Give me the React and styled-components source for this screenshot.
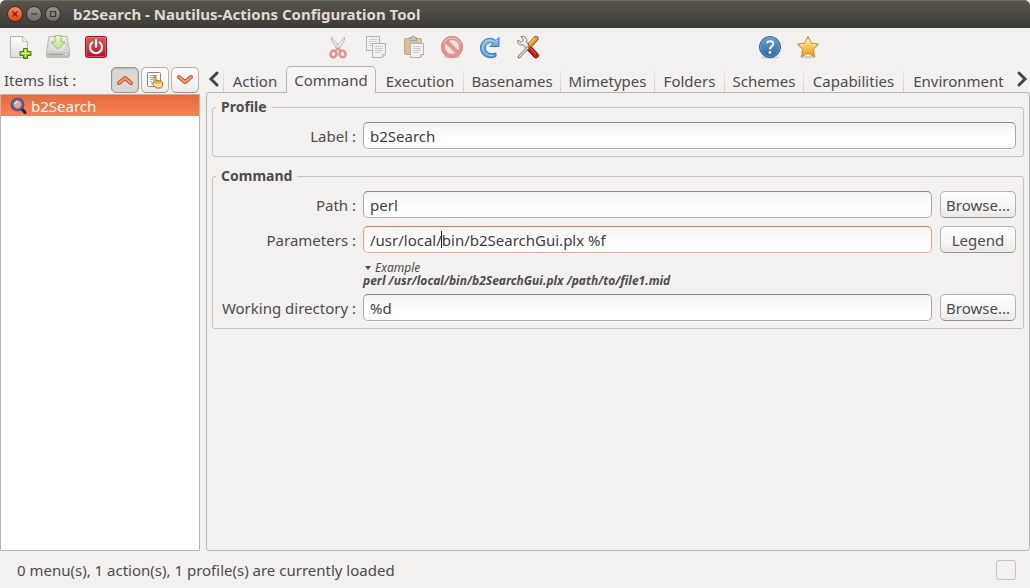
import React, { useState } from "react";
import styled, { createGlobalStyle, css } from "styled-components";

const GlobalStyle = createGlobalStyle`
  *, *::before, *::after { box-sizing: border-box; }
  body {
    margin: 0;
    background: #f2f1f0;
    color: #4c4c4c;
    font: 15px/20px "Noto Sans", "Open Sans", sans-serif;
  }
  button, input { font: inherit; color: inherit; margin: 0; }
`;

const Window = styled.div`
  display: flex;
  flex-direction: column;
  min-height: 100vh;
`;

const TitleBar = styled.header`
  display: flex;
  align-items: center;
  height: 28px;
  padding: 0 7px;
  gap: 3px;
  border-radius: 6px 6px 0 0;
  background: linear-gradient(#59564e, #3d3b37);
  box-shadow: inset 0 1px #6b6860;
`;

const WindowButton = styled.button`
  width: 16px;
  height: 16px;
  padding: 0;
  border: 1px solid #33322e;
  border-radius: 50%;
  background: ${(p) =>
    p.$close ? "linear-gradient(#f58763, #df4a16)" : "linear-gradient(#96948b, #706e66)"};
  svg { display: block; }
`;

const Title = styled.h1`
  margin: 0 0 0 9px;
  font-size: 15px;
  line-height: 20px;
  font-weight: 700;
  color: #dfdbd2;
  white-space: nowrap;
`;

const Toolbar = styled.div`
  display: grid;
  grid-template-columns: 318fr 432fr 279fr;
  height: 38px;
  padding-left: 1px;
`;

const ToolGroup = styled.div`
  display: flex;
`;

const ToolButton = styled.button`
  display: flex;
  align-items: center;
  justify-content: center;
  width: 38px;
  height: 38px;
  padding: 0;
  border: 0;
  background: none;
  svg { opacity: ${(p) => (p.disabled ? 0.5 : 1)}; }
`;

const Main = styled.main`
  display: flex;
  flex: 1;
  gap: 6px;
`;

const Sidebar = styled.aside`
  display: flex;
  flex-direction: column;
  width: 200px;
  flex: none;
`;

const SidebarHeader = styled.div`
  display: flex;
  align-items: center;
  gap: 2px;
  height: 28px;
  padding: 0 1px 0 4px;
`;

const ListTitle = styled.span`
  flex: 1;
  white-space: nowrap;
`;

const raised = css`
  border: 1px solid #b4b1ad;
  border-bottom-color: #96938f;
  border-radius: 5px;
  background: linear-gradient(#fefefe, #f6f5f5 60%, #ebe9e7);
`;

const SmallButton = styled.button`
  ${raised}
  display: flex;
  align-items: center;
  justify-content: center;
  width: 28px;
  height: 26px;
  padding: 0;
  ${(p) =>
    p.$pressed &&
    css`
      background: #d9d8d7;
      border-color: #989591;
      box-shadow: inset 0 1px 2px #b5b3b1;
    `}
`;

const Tree = styled.ul`
  flex: 1;
  margin: 0;
  padding: 0;
  list-style: none;
  background: #fff;
  border: 1px solid #b9b5b0;
`;

const TreeRow = styled.li`
  display: flex;
  align-items: center;
  gap: 3px;
  height: 21px;
  padding-left: 9px;
  color: #fff;
  background: linear-gradient(#e8693c, #fa8254);
`;

const Notebook = styled.section`
  display: flex;
  flex-direction: column;
  flex: 1;
  min-width: 0;
`;

const TabBar = styled.div`
  display: flex;
  height: 26px;
`;

const TabArrow = styled.button`
  display: flex;
  align-items: center;
  justify-content: ${(p) => (p.$left ? "flex-start" : "center")};
  width: 17px;
  padding: 0 2px;
  border: 0;
  background: none;
`;

const Tabs = styled.div`
  display: grid;
  grid-template-columns: 63fr 90fr 87fr 97fr 94fr 70fr 79fr 100fr 110fr;
  flex: 1;
  min-width: 0;
`;

const Tab = styled.button`
  min-width: 0;
  padding: 3px 0 0;
  border: 0;
  border-left: 1px solid transparent;
  border-image: ${(p) => (p.$divider ? "linear-gradient(#f2f1f0, #cfccc9) 1" : "none")};
  background: none;
  white-space: nowrap;
  text-align: center;
  ${(p) =>
    p.$active &&
    css`
      position: relative;
      height: 27px;
      padding-top: 0;
      border: 1px solid #bab7b3;
      border-bottom: 0;
      border-radius: 5px 5px 0 0;
      background: linear-gradient(#f7f6f5, #f2f1f0);
    `}
`;

const Page = styled.div`
  display: flex;
  flex-direction: column;
  flex: 1;
  gap: 10px;
  padding: 5px;
  border: 1px solid #bab7b3;
  border-radius: 3px;
`;

const Group = styled.fieldset`
  min-width: 0;
  margin: 0;
  padding: 6px 7px 6px 12px;
  border: 1px solid #c6c3c0;
  border-radius: 3px;
`;

const GroupTitle = styled.legend`
  margin-left: -9px;
  padding: 0 5px;
  font-weight: 700;
  font-size: 14px;
  line-height: 18px;
`;

const Rows = styled.div`
  display: grid;
  grid-template-columns: 131px 1fr 76px;
  column-gap: 8px;
  row-gap: 7px;
`;

const FieldLabel = styled.label`
  grid-column: 1;
  display: flex;
  align-items: center;
  justify-content: flex-end;
  height: 27px;
  white-space: nowrap;
`;

const Field = styled.div`
  position: relative;
  min-width: 0;
  height: 28px;
  margin-left: -1px;
  grid-column: ${(p) => (p.$wide ? "2 / 4" : "2")};
`;

const TextBox = styled.input`
  display: block;
  width: 100%;
  height: 27px;
  padding: 0 6px;
  border: 1px solid;
  border-color: ${(p) => (p.$active ? "#e07b57 #eb9b7e #eda88f" : "#8c8986 #a9a6a3 #b0adaa")};
  border-radius: 5px;
  background: linear-gradient(#f3f3f3, #fff 60%);
  box-shadow: 0 1px #f8f8f7;
  color: #3c3c3c;
  outline: none;
`;

const Caret = styled.span`
  position: absolute;
  left: 78px;
  top: 5px;
  width: 1px;
  height: 17px;
  background: #222;
`;

const ActionButton = styled.button`
  ${raised}
  height: 27px;
  padding: 0;
  white-space: nowrap;
`;

const Example = styled.details`
  grid-column: 2 / 4;
  margin-left: -1px;
  font-size: 12px;
  line-height: 13px;
  font-style: italic;
`;

const ExampleTitle = styled.summary`
  display: flex;
  align-items: center;
  gap: 4px;
  padding-left: 2px;
`;

const ExampleText = styled.div`
  font-weight: 700;
  white-space: nowrap;
`;

const StatusBar = styled.footer`
  display: flex;
  align-items: center;
  justify-content: space-between;
  height: 37px;
  padding: 0 14px 0 17px;
`;

const StatusFrame = styled.span`
  width: 20px;
  height: 20px;
  border: 1px solid #c6c3c0;
  border-radius: 3px;
`;

const Svg = ({ size = 24, children }) => (
  <svg width={size} height={size} viewBox={`0 0 ${size} ${size}`} fill="none" aria-hidden="true">
    {children}
  </svg>
);

const Grad = ({ id, from, to }) => (
  <linearGradient id={id} x1="0" y1="0" x2="0" y2="1">
    <stop offset="0" stopColor={from} />
    <stop offset="1" stopColor={to} />
  </linearGradient>
);

const NewIcon = () => (
  <Svg>
    <defs>
      <Grad id="page" from="#fdfdfd" to="#dedede" />
      <Grad id="plus" from="#c5e65a" to="#73ac14" />
    </defs>
    <path d="M2.5 1.5h12l5 5v16h-17z" fill="url(#page)" stroke="#b3b3b0" />
    <path d="M14.5 1.5v5h5z" fill="#fff" stroke="#bebebb" strokeLinejoin="round" />
    <path d="M15.5 13.500h4v3h3.500v4h-3.500v3h-4v-3h-3.500v-4h3.500z" fill="url(#plus)" stroke="#4d7a0b" />
    <path d="M17.500 15v7M13.500 18.500h8" stroke="#e0f592" />
  </Svg>
);

const SaveIcon = () => (
  <Svg>
    <defs>
      <Grad id="drive" from="#ededeb" to="#cfcfcc" />
      <Grad id="down" from="#eef6d6" to="#c3e08c" />
    </defs>
    <path d="M3 1.500h18l2.500 15v4.500q0 1.500-1.500 1.500H2q-1.500 0-1.500-1.500v-4.500z" fill="url(#drive)" stroke="#b9b9b5" />
    <path d="M1 17.500h22v3.500q0 1-1 1H2q-1 0-1-1z" fill="#c0c0bd" />
    <path d="M3 19.500h14" stroke="#a1a19d" />
    <path d="M19 19.500h2" stroke="#fff" />
    <ellipse cx="12" cy="11.500" rx="9" ry="5" fill="#e3e3e1" stroke="#d0d0cd" />
    <path d="M9 .500h6v6.500h4L12 14.500 5 7h4z" fill="url(#down)" stroke="#9cc46c" />
  </Svg>
);

const QuitIcon = () => (
  <Svg>
    <defs><Grad id="quit" from="#e35b59" to="#b40d29" /></defs>
    <rect x="1.500" y="1.500" width="21" height="21" rx="2" fill="url(#quit)" stroke="#a51326" />
    <rect x="2.500" y="2.500" width="19" height="19" rx="1" stroke="#ed7775" strokeOpacity=".6" />
    <path d="M8.300 7.500a6 6 0 1 0 7.400 0" stroke="#fff" strokeWidth="2.200" strokeLinecap="round" />
    <path d="M12 5v7" stroke="#fff" strokeWidth="2.200" strokeLinecap="round" />
  </Svg>
);

const CutIcon = () => (
  <Svg>
    <path d="M5.500 2C5 5 6.500 7 8.500 10l3.500 5 2-2.500z" fill="#e4e4e2" stroke="#777" strokeWidth=".9" />
    <path d="M18.500 2c.5 3-1 5-3 8L12 15l-2-2.500z" fill="#f1f1ef" stroke="#777" strokeWidth=".9" />
    <ellipse cx="7.500" cy="19" rx="3" ry="3.300" transform="rotate(25 7.500 19)" stroke="#d63636" strokeWidth="2.600" />
    <ellipse cx="16.500" cy="19" rx="3" ry="3.300" transform="rotate(-25 16.500 19)" stroke="#d63636" strokeWidth="2.600" />
    <path d="M9 16l3-2.500 3 2.500" stroke="#d63636" strokeWidth="2.200" />
  </Svg>
);

const Sheet = ({ x, y }) => (
  <g transform={`translate(${x} ${y})`}>
    <path d="M.500.500h13v11l-3 3H.500z" fill="#f4f4f2" stroke="#777" />
    <path d="M13.500 11.500h-3v3" fill="#ccc" stroke="#777" />
    <path d="M3 3.500h8M3 5.500h8M3 7.500h8M3 9.500h6" stroke="#a7a7a5" />
  </g>
);

const CopyIcon = () => (
  <Svg>
    <Sheet x={2} y={1} />
    <Sheet x={8} y={8} />
  </Svg>
);

const PasteIcon = () => (
  <Svg>
    <rect x="2.500" y="3.500" width="17" height="16" rx="1" fill="#bd8a48" stroke="#8c6538" />
    <path d="M4 5h14v14" stroke="#d3a96f" />
    <path d="M7.500 4.500v-2h2q0-1.500 1.500-1.500t1.500 1.500h2v3h-7z" fill="#999" stroke="#555" />
    <Sheet x={8} y={8} />
  </Svg>
);

const DeleteIcon = () => (
  <Svg>
    <ellipse cx="12" cy="22" rx="9" ry="1.500" fill="#bbb" />
    <circle cx="12" cy="12" r="9" fill="#f1d4d2" stroke="#d43535" strokeWidth="4" />
    <path d="M6 6l12 12" stroke="#d43535" strokeWidth="4" />
    <circle cx="12" cy="12" r="10.500" stroke="#b52323" strokeWidth=".8" />
    <path d="M3.500 9a9 9 0 0 1 17 0" stroke="#f39a94" />
  </Svg>
);

const RefreshIcon = () => (
  <Svg>
    <defs><Grad id="refresh" from="#8dbbe6" to="#4d90d2" /></defs>
    <path
      d="M21 2.500v9h-9l3.200-3.200C11 6.500 7.500 9 7.500 13c0 4.500 5 7 10.500 5v3.500C10 25 2.500 20.500 2.500 13 2.500 4.500 11.500.500 18 5.500z"
      fill="url(#refresh)" stroke="#397cbd" strokeLinejoin="round"
    />
    <path d="M4.500 13C5 6 12 3 17.500 7.200l2.200-2.200M4.500 13c.5 5 5 8.500 11 7.500" stroke="#b9d8f3" />
  </Svg>
);

const ToolsIcon = () => (
  <Svg>
    <path d="M13 13l7 7.500" stroke="#8d0e0e" strokeWidth="5.600" strokeLinecap="round" />
    <path d="M13 13l7 7.500" stroke="#c81a1a" strokeWidth="4" strokeLinecap="round" />
    <path d="M14 12.500l6 6.500" stroke="#ef7268" />
    <path d="M2 5l3 2.500L7.500 5 5 1.500c4-.7 6.500 2 5.500 5.500l3.500 4-3 3-4-4.500C4 11 1 8.500 2 5z" fill="#efefed" stroke="#777" />
    <path d="M3 22l9-9.500" stroke="#777" strokeWidth="2.800" strokeLinecap="round" />
    <path d="M3 22l9-9.500" stroke="#e6e6e4" strokeWidth="1.200" />
    <path d="M14.500 9.500l5.500-6" stroke="#a55c09" strokeWidth="5.400" strokeLinecap="round" />
    <path d="M14.500 9.500l5.500-6" stroke="#e79420" strokeWidth="3.800" strokeLinecap="round" />
    <path d="M13.500 9l5.500-6" stroke="#fbd07b" strokeWidth="1.200" />
  </Svg>
);

const HelpIcon = () => (
  <Svg>
    <defs><Grad id="help" from="#6b9fd4" to="#2b659f" /></defs>
    <ellipse cx="12" cy="22.500" rx="9" ry="1.300" fill="#ccc" />
    <circle cx="12" cy="12" r="10.500" fill="url(#help)" stroke="#285b8c" />
    <circle cx="12" cy="12" r="9.500" stroke="#84b2df" strokeOpacity=".6" />
    <path d="M8.800 8.200C10 5.500 15.500 5.700 15.300 9c-.1 2.300-3.300 2.500-3.300 5.300" stroke="#fff" strokeWidth="2" />
    <circle cx="12" cy="17.500" r="1.400" fill="#fff" />
  </Svg>
);

const StarIcon = () => (
  <Svg>
    <defs><Grad id="star" from="#fff0a0" to="#f59a14" /></defs>
    <ellipse cx="12" cy="22" rx="8" ry="1.500" fill="#ccc" />
    <path
      d="M12 1.500l3.200 6.800 7.300.9-5.400 5.200 1.500 7.300L12 18.100l-6.600 3.600 1.500-7.300L1.500 9.200l7.300-.9z"
      fill="url(#star)" stroke="#c78a14" strokeLinejoin="round"
    />
    <path d="M12 4l2.500 5.200 5.500.8M12 4L9.500 9.200 4 10" stroke="#fff6c9" />
  </Svg>
);

const ChevronIcon = ({ up }) => (
  <Svg size={18}>
    <path d={up ? "M3 12l6-5 6 5" : "M3 6l6 5 6-5"} stroke="#c4521f" strokeWidth="4" strokeLinecap="round" strokeLinejoin="round" />
    <path d={up ? "M3 12l6-5 6 5" : "M3 6l6 5 6-5"} stroke="#f5a27a" strokeWidth="1.800" strokeLinecap="round" strokeLinejoin="round" />
  </Svg>
);

const HandIcon = () => (
  <Svg size={18}>
    <rect x="1.500" y="1.500" width="13" height="14" rx="1" fill="#fcfcfa" stroke="#85857f" />
    <path d="M4 4.500h7M4 6.500h4M4 8.500h3M4 10.500h2" stroke="#aaa" />
    <path
      d="M8 12V5.500q1-1.500 2 0v4q1-1 2 .3 1-.8 2 .4 1.500-.7 2.500 1v3.300q-.5 2-2 2.500h-4.500L6 12.500q.5-1.500 2-.5z"
      fill="#f9dca0" stroke="#b56b12" strokeLinejoin="round"
    />
    <path d="M10 9.500v3M12 10v2.500M14 10.500v2" stroke="#b56b12" strokeWidth=".8" />
  </Svg>
);

const SearchIcon = () => (
  <Svg size={18}>
    <path d="M11 11l4 4.500" stroke="#2d2930" strokeWidth="3.200" strokeLinecap="round" />
    <circle cx="7.500" cy="7.500" r="5.500" fill="#e9a08c" stroke="#283779" strokeWidth="2.600" />
    <circle cx="7.500" cy="7.500" r="5.500" stroke="#6d8ed4" strokeWidth="1" />
    <path d="M5 7q.5-2 2.500-2.300" stroke="#fff" strokeWidth="1.500" />
  </Svg>
);

const ArrowIcon = ({ left }) => (
  <svg width="12" height="18" viewBox="0 0 12 18" fill="none" aria-hidden="true">
    <path d={left ? "M9 3L3 9l6 6" : "M3 3l6 6-6 6"} stroke="#454545" strokeWidth="3" strokeLinecap="round" />
  </svg>
);

const WindowGlyph = ({ d, color = "#3b3a36" }) => (
  <svg width="14" height="14" viewBox="0 0 14 14" fill="none" aria-hidden="true">
    <path d={d} stroke={color} strokeWidth="1.200" />
  </svg>
);

const TOOLS = [
  [
    ["New", NewIcon],
    ["Save", SaveIcon],
    ["Quit", QuitIcon],
  ],
  [
    ["Cut", CutIcon, true],
    ["Copy", CopyIcon, true],
    ["Paste", PasteIcon, true],
    ["Delete", DeleteIcon, true],
    ["Reload", RefreshIcon],
    ["Preferences", ToolsIcon],
  ],
  [
    ["Help", HelpIcon],
    ["About", StarIcon],
  ],
];

const TABS = [
  "Action", "Command", "Execution", "Basenames", "Mimetypes",
  "Folders", "Schemes", "Capabilities", "Environment",
];

export default function App() {
  const [active, setActive] = useState(1);

  return (
    <Window>
      <GlobalStyle />
      <TitleBar>
        <WindowButton $close aria-label="Close"><WindowGlyph d="M4.500 4.500l5 5M9.500 4.500l-5 5" color="#6b2409" /></WindowButton>
        <WindowButton aria-label="Minimize"><WindowGlyph d="M4 7h6" /></WindowButton>
        <WindowButton aria-label="Maximize"><WindowGlyph d="M4.500 4.500h5v5h-5z" /></WindowButton>
        <Title>b2Search - Nautilus-Actions Configuration Tool</Title>
      </TitleBar>

      <Toolbar role="toolbar">
        {TOOLS.map((group, i) => (
          <ToolGroup key={i}>
            {group.map(([name, Icon, disabled]) => (
              <ToolButton key={name} aria-label={name} disabled={disabled}><Icon /></ToolButton>
            ))}
          </ToolGroup>
        ))}
      </Toolbar>

      <Main>
        <Sidebar>
          <SidebarHeader>
            <ListTitle>Items list :</ListTitle>
            <SmallButton $pressed aria-label="Sort ascending"><ChevronIcon up /></SmallButton>
            <SmallButton aria-label="Sort manually"><HandIcon /></SmallButton>
            <SmallButton aria-label="Sort descending"><ChevronIcon /></SmallButton>
          </SidebarHeader>
          <Tree>
            <TreeRow><SearchIcon />b2Search</TreeRow>
          </Tree>
        </Sidebar>

        <Notebook>
          <TabBar>
            <TabArrow $left aria-label="Previous tab"><ArrowIcon left /></TabArrow>
            <Tabs role="tablist">
              {TABS.map((name, i) => (
                <Tab
                  key={name}
                  role="tab"
                  aria-selected={i === active}
                  $active={i === active}
                  $divider={i !== active && i !== active + 1}
                  onClick={() => setActive(i)}
                >
                  {name}
                </Tab>
              ))}
            </Tabs>
            <TabArrow aria-label="Next tab"><ArrowIcon /></TabArrow>
          </TabBar>

          <Page>
            <Group>
              <GroupTitle>Profile</GroupTitle>
              <Rows>
                <FieldLabel htmlFor="label">Label :</FieldLabel>
                <Field $wide><TextBox id="label" defaultValue="b2Search" /></Field>
              </Rows>
            </Group>

            <Group>
              <GroupTitle>Command</GroupTitle>
              <Rows>
                <FieldLabel htmlFor="path">Path :</FieldLabel>
                <Field><TextBox id="path" defaultValue="perl" /></Field>
                <ActionButton>Browse...</ActionButton>

                <FieldLabel htmlFor="parameters">Parameters :</FieldLabel>
                <Field>
                  <TextBox id="parameters" $active defaultValue="/usr/local/bin/b2SearchGui.plx %f" />
                  <Caret />
                </Field>
                <ActionButton>Legend</ActionButton>

                <Example open>
                  <ExampleTitle>
                    <svg width="6" height="4" viewBox="0 0 6 4" aria-hidden="true"><path d="M0 0h6L3 4z" fill="#4c4c4c" /></svg>
                    Example
                  </ExampleTitle>
                  <ExampleText>perl /usr/local/bin/b2SearchGui.plx /path/to/file1.mid</ExampleText>
                </Example>

                <FieldLabel htmlFor="directory">Working directory :</FieldLabel>
                <Field><TextBox id="directory" defaultValue="%d" /></Field>
                <ActionButton>Browse...</ActionButton>
              </Rows>
            </Group>
          </Page>
        </Notebook>
      </Main>

      <StatusBar>
        <span>0 menu(s), 1 action(s), 1 profile(s) are currently loaded</span>
        <StatusFrame />
      </StatusBar>
    </Window>
  );
}
